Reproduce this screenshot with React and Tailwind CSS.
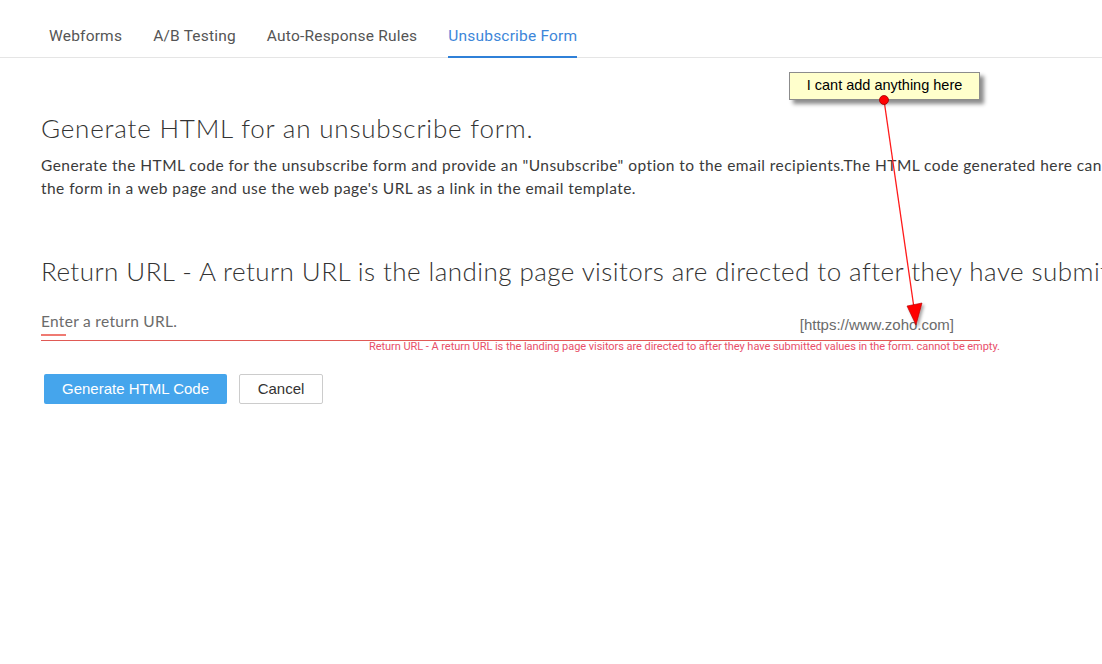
const tabs = ['Webforms', 'A/B Testing', 'Auto-Response Rules', 'Unsubscribe Form'];

function Tabs() {
  return (
    <div className="flex gap-[31px] border-b border-[#e5e5e5] pl-[49px] font-['Roboto',sans-serif] text-[15.5px] leading-[20px] tracking-[0.2px]">
      {tabs.map((t) => {
        const active = t === 'Unsubscribe Form';
        return (
          <div
            key={t}
            className={active ? '-mb-px border-b-2 border-[#2f80d8] pb-[9px] pt-[26px] text-[#3d86d9]' : 'pb-[11px] pt-[26px] text-[#555]'}
          >
            {t}
          </div>
        );
      })}
    </div>
  );
}

function Annotation() {
  return (
    <>
      <svg className="pointer-events-none absolute left-0 top-0" width="1102" height="664">
        <defs>
          <filter id="sh" x="-50%" y="-50%" width="200%" height="200%">
            <feDropShadow dx="2" dy="2" stdDeviation="1.5" floodColor="#000" floodOpacity="0.35" />
          </filter>
        </defs>
        <line x1="884" y1="100" x2="914" y2="308" stroke="#ff1a1a" strokeWidth="1.3" />
        <polygon points="907,306 922,303 916,325" fill="#ff0000" stroke="#b00000" strokeWidth="0.6" filter="url(#sh)" />
      </svg>
      <div className="absolute left-[789px] top-[72px] flex h-[28px] w-[191px] items-center justify-center border border-[#8c8c8c] bg-[#ffffcc] font-['Liberation_Sans',Arial,sans-serif] text-[14.5px] text-black shadow-[4px_4px_4px_rgba(0,0,0,0.45)]">
        I cant add anything here
      </div>
      <svg className="pointer-events-none absolute left-0 top-0" width="1102" height="664">
        <circle cx="884" cy="100" r="4.5" fill="#ff0000" stroke="#a00000" strokeWidth="0.8" />
      </svg>
    </>
  );
}

export default function App() {
  return (
    <div className="relative h-[664px] w-[1102px] overflow-hidden bg-white font-['Lato',sans-serif] text-[#333]">
      <Tabs />
      <div className="pl-[41px]">
        <h1 className="mt-[54px] whitespace-nowrap text-[26px] font-light leading-[32px] tracking-[0.8px] text-[#333]">Generate HTML for an unsubscribe form.</h1>
        <div className="mt-[10px] whitespace-nowrap text-[15.5px] leading-[23px] tracking-[0.45px] text-[#3a3a3a]">
          <p>Generate the HTML code for the unsubscribe form and provide an "Unsubscribe" option to the email recipients.The HTML code generated here cannot be used directly. Host</p>
          <p>the form in a web page and use the web page's URL as a link in the email template.</p>
        </div>
        <h2 className="mt-[55px] whitespace-nowrap text-[26px] font-light leading-[32px] tracking-[0.44px] text-[#333]">
          Return URL - A return URL is the landing page visitors are directed to after they have submitted values in the form.
        </h2>
        <div className="mt-[24px] w-[939px]">
          <div className="flex items-end justify-between border-b border-[#e05a55] pr-[26px]">
            <div className="flex flex-col">
              <span className="text-[15.5px] leading-[20px] tracking-[0.3px] text-[#6b6b6b]">Enter a return URL.</span>
              <span className="mb-[4px] mt-[3px] h-[2px] w-[25px] bg-[#ef7a72]" />
            </div>
            <span className="mb-[6px] font-['Liberation_Sans',Arial,sans-serif] text-[15px] leading-[18px] text-[#6b6b6b]">[https://www.zoho.com]</span>
          </div>
        </div>
        <p className="ml-[328px] whitespace-nowrap font-['Roboto',sans-serif] text-[11px] leading-[12px] tracking-[-0.05px] text-[#e8506a]">
          Return URL - A return URL is the landing page visitors are directed to after they have submitted values in the form. cannot be empty.
        </p>
        <div className="mt-[21px] flex gap-[12px] pl-[3px]">
          <button className="h-[30px] w-[183px] rounded-[2px] bg-[#45a5ec] font-['Liberation_Sans',Arial,sans-serif] text-[15px] text-white">Generate HTML Code</button>
          <button className="h-[30px] w-[84px] rounded-[2px] border border-[#cccccc] bg-white font-['Liberation_Sans',Arial,sans-serif] text-[15px] text-[#333]">Cancel</button>
        </div>
      </div>
      <Annotation />
    </div>
  );
}
